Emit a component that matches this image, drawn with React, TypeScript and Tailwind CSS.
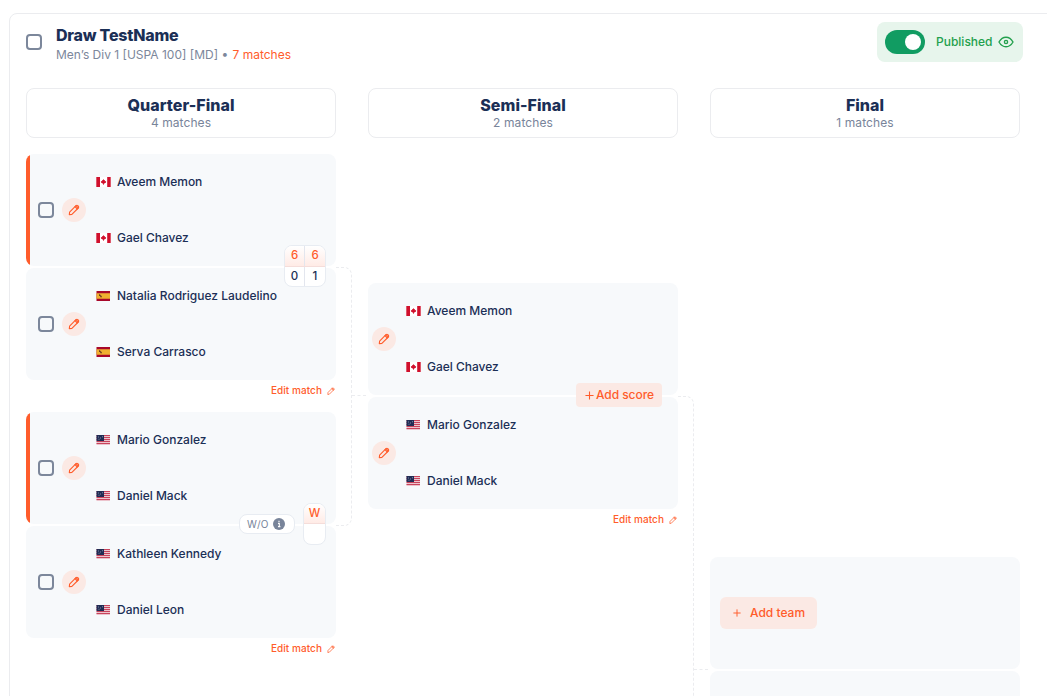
import React from "react";

type Country = "ca" | "es" | "us";
type Player = { name: string; country: Country };

function Pencil({ size }: { size: number }) {
  return (
    <svg width={size} height={size} viewBox="0 0 12 12" fill="none" stroke="#ff5c2b" strokeWidth="1.100" strokeLinejoin="round" strokeLinecap="round" className="shrink-0">
      <path d="M1.300 10.700 1.600 8.100 8 1.700a1.300 1.300 0 0 1 1.800 0l.5.5a1.300 1.300 0 0 1 0 1.800L3.900 10.400Z" />
      <path d="M7 2.700 9.300 5M8 1.700l2.300 2.300" />
    </svg>
  );
}

function Plus({ size }: { size: number }) {
  return (
    <svg width={size} height={size} viewBox="0 0 10 10" stroke="#ff5c2b" strokeWidth="1.200" className="shrink-0">
      <path d="M5 .5v9M.5 5h9" />
    </svg>
  );
}

function Flag({ country }: { country: Country }) {
  if (country === "ca")
    return (
      <svg width="15" height="10" viewBox="0 0 15 10" className="shrink-0">
        <path fill="#fff" d="M0 0h15v10H0z" />
        <path fill="#d0102c" d="M.3 0H4v10H.3zM11.200 0h3.500v10h-3.500zM7.500 2l.7 1.200.8-.3-.2 1.300 1.400-.2-.4 1.100.3.400-2.200 1.200v1h-.8v-1L4.900 5.500l.3-.4L4.800 4l1.400.2L6 2.900l.8.300Z" />
      </svg>
    );
  if (country === "es")
    return (
      <svg width="15" height="10" viewBox="0 0 15 10" className="shrink-0">
        <path fill="#a8082a" d="M.5 0h13.500v10H.5z" />
        <path fill="#f0b030" d="M.5 2.300h13.500v5.400H.5z" />
        <path fill="#6b3a20" d="M3 3.200h1.200v1H5l1.200 2H4.200V5H3z" />
      </svg>
    );
  return (
    <svg width="15" height="10" viewBox="0 0 15 10" className="shrink-0">
      <path fill="#ecc4cd" d="M.5 0h13.500v10H.5z" />
      <path fill="#c8445c" d="M.5 0h13.500v1H.5zM.5 2h13.500v1H.5zM.5 4h13.500v1H.5zM.5 6h13.500v1H.5zM.5 8h13.500v1H.5z" />
      <path fill="#202c54" d="M.5 0h7.500v6H.5z" />
      <path fill="#7e88a6" d="M2 1.500h1v1H2zM4 2.500h1v1H4zM6 1.300h1v1H6zM2.500 3.700h1v1h-1z" />
    </svg>
  );
}

function Checkbox() {
  return <span className="block size-4 shrink-0 rounded-[4px] border-2 border-[#7c879b]" />;
}

function Team({ players, winner, selectable }: { players: Player[]; winner?: boolean; selectable?: boolean }) {
  return (
    <div className="flex h-28 items-center overflow-hidden rounded-lg bg-[#f7f9fb]">
      {winner && <div className="h-full w-1 shrink-0 bg-[#ff5c2b]" />}
      <div className={"flex h-full items-center " + (winner ? "pl-2" : selectable ? "pl-3" : "pl-1")}>
        {selectable && <div className="mr-2"><Checkbox /></div>}
        <div className="flex size-6 items-center justify-center rounded-full bg-[#fbe9e4]">
          <Pencil size={12} />
        </div>
        <div className="ml-2.5 flex h-full flex-col">
          {players.map((p) => (
            <div key={p.name} className="flex h-14 items-center gap-1.5 text-xs font-medium tracking-[-0.01px]">
              <Flag country={p.country} />
              <span>{p.name}</span>
            </div>
          ))}
        </div>
      </div>
    </div>
  );
}

function EditMatch() {
  return (
    <div className="flex h-[21px] items-center justify-end gap-[5px] pr-px text-[10px] font-medium tracking-[0.06px] text-[#ff5c2b]">
      <span>Edit match</span>
      <Pencil size={8} />
    </div>
  );
}

function Match({ top, bottom, selectable, winner, children }: { top: Player[]; bottom: Player[]; selectable?: boolean; winner?: boolean; children?: React.ReactNode }) {
  return (
    <div className="relative flex h-[258px] flex-col">
      <div className="flex flex-col gap-0.5">
        <Team players={top} selectable={selectable} winner={winner} />
        <Team players={bottom} selectable={selectable} />
      </div>
      <EditMatch />
      {children}
    </div>
  );
}

function RoundHeader({ title, count }: { title: string; count: number }) {
  return (
    <div className="flex h-[50px] flex-col items-center rounded-lg border border-[#ebecef] pt-[7px]">
      <div className="text-base leading-[19px] font-extrabold tracking-[0.04px]">{title}</div>
      <div className="text-xs leading-4 tracking-[0.08px] text-[#78849a]">{count} matches</div>
    </div>
  );
}

const cell = "flex h-5 w-5 items-center justify-center";
const winCell = "bg-linear-to-b from-white to-[#ffebe6] text-[#ff5c2b]";

export default function App() {
  return (
    <div className="h-[696px] w-[1047px] overflow-hidden bg-white pt-[13px] pl-[9px] font-['Inter',sans-serif] text-[#1b2f56]">
      <div className="h-[720px] w-[1060px] rounded-tl-lg border border-[#ebecef] pl-4">
        <header className="flex h-[74px] w-[997px] items-start">
          <div className="mt-5"><Checkbox /></div>
          <div className="ml-3.5 pt-[11px]">
            <h1 className="text-[16px] leading-[21px] font-extrabold tracking-[-0.22px]">Draw TestName</h1>
            <div className="text-xs leading-[18px] text-[#7c879b]">
              Men’s Div 1 [USPA 100] [MD] <span className="pr-px">•</span> <span className="text-[#ff5c2b]">7 matches</span>
            </div>
          </div>
          <div className="mt-2 ml-auto flex h-10 w-[146px] items-center rounded-lg bg-[#e7f5ec] pl-2">
            <div className="flex h-6 w-10 items-center justify-end rounded-full bg-[#119c62] pr-1">
              <span className="size-4 rounded-full bg-white" />
            </div>
            <span className="ml-[11px] w-[57px] text-xs font-medium text-[#23a04d]">Published</span>
            <svg width="16" height="12" viewBox="0 0 16 12" fill="none" stroke="#23a04d" strokeWidth="1.400" className="ml-[5px]">
              <path d="M1 6c1.800-3.200 4.200-4.800 7-4.800S13.200 2.800 15 6c-1.800 3.200-4.200 4.800-7 4.800S2.800 9.200 1 6Z" />
              <circle cx="8" cy="6" r="1.600" />
            </svg>
          </div>
        </header>

        <main className="grid grid-cols-[310px_310px_310px] gap-8">
          <section className="relative">
            <RoundHeader title="Quarter-Final" count={4} />
            <div className="pt-4">
              <Match
                selectable
                winner
                top={[{ name: "Aveem Memon", country: "ca" }, { name: "Gael Chavez", country: "ca" }]}
                bottom={[{ name: "Natalia Rodriguez Laudelino", country: "es" }, { name: "Serva Carrasco", country: "es" }]}
              >
                <div className="absolute top-[91px] right-[10px] overflow-hidden rounded-lg border border-[#e8ecf2] bg-white text-[11.5px] font-medium">
                  <div className={"flex divide-x divide-[#e3e6ee] border-b border-[#f5ddda] " + winCell}>
                    <span className={cell}>6</span>
                    <span className={cell}>6</span>
                  </div>
                  <div className="flex h-[19px] divide-x divide-[#e3e6ee]">
                    <span className={cell}>0</span>
                    <span className={cell}>1</span>
                  </div>
                </div>
              </Match>
              <Match
                selectable
                winner
                top={[{ name: "Mario Gonzalez", country: "us" }, { name: "Daniel Mack", country: "us" }]}
                bottom={[{ name: "Kathleen Kennedy", country: "us" }, { name: "Daniel Leon", country: "us" }]}
              >
                <div className="absolute top-[91px] right-[10px] h-[42px] w-[23px] overflow-hidden rounded-lg border border-[#e8ecf2] bg-white text-[11.5px] font-medium">
                  <div className={"flex h-5 items-center justify-center border-b border-[#f5ddda] " + winCell}>W</div>
                </div>
                <div className="absolute top-[102px] right-[41px] flex h-5 w-14 items-center gap-[5px] rounded-lg border border-[#e8ecf2] bg-white pl-[7px] text-[10px] tracking-[0.1px] text-[#78849a]">
                  W/O
                  <svg width="12" height="12" viewBox="0 0 12 12">
                    <circle cx="6" cy="6" r="6" fill="#78849a" />
                    <path d="M5 5.400h1.300v3.200M5 8.600h2.400M6 2.800v1.300" stroke="#fff" strokeWidth="1.100" fill="none" />
                  </svg>
                </div>
              </Match>
            </div>
            <div className="absolute top-[179px] left-[310px] h-[259px] w-4 rounded-r-lg border border-l-0 border-dashed border-[#ebecef]" />
            <div className="absolute top-[307px] left-[326px] w-[14px] border-t border-dashed border-[#ebecef]" />
          </section>

          <section className="relative">
            <RoundHeader title="Semi-Final" count={2} />
            <div className="pt-[145px]">
              <Match
                top={[{ name: "Aveem Memon", country: "ca" }, { name: "Gael Chavez", country: "ca" }]}
                bottom={[{ name: "Mario Gonzalez", country: "us" }, { name: "Daniel Mack", country: "us" }]}
              >
                <div className="absolute top-[100px] right-4 flex h-6 w-[86px] items-center justify-center gap-[2px] rounded bg-[#fbe9e4] pl-px text-xs font-medium tracking-[-0.05px] text-[#ff5c2b]">
                  <Plus size={9} />
                  Add score
                </div>
              </Match>
            </div>
            <div className="absolute top-[308px] left-[310px] h-[340px] w-4 rounded-tr-lg border-t border-r border-dashed border-[#ebecef]" />
            <div className="absolute top-[581px] left-[326px] w-[14px] border-t border-dashed border-[#ebecef]" />
          </section>

          <section>
            <RoundHeader title="Final" count={1} />
            <div className="flex flex-col gap-0.5 pt-[419px]">
              <div className="flex h-28 items-center rounded-lg bg-[#f7f9fb] pl-2.5">
                <div className="flex h-8 w-[97px] items-center gap-[9px] rounded-md bg-[#fbe9e4] pl-[13px] text-xs font-medium text-[#ff5c2b]">
                  <Plus size={8} />
                  Add team
                </div>
              </div>
              <div className="h-28 rounded-lg bg-[#f7f9fb]" />
            </div>
          </section>
        </main>
      </div>
    </div>
  );
}
